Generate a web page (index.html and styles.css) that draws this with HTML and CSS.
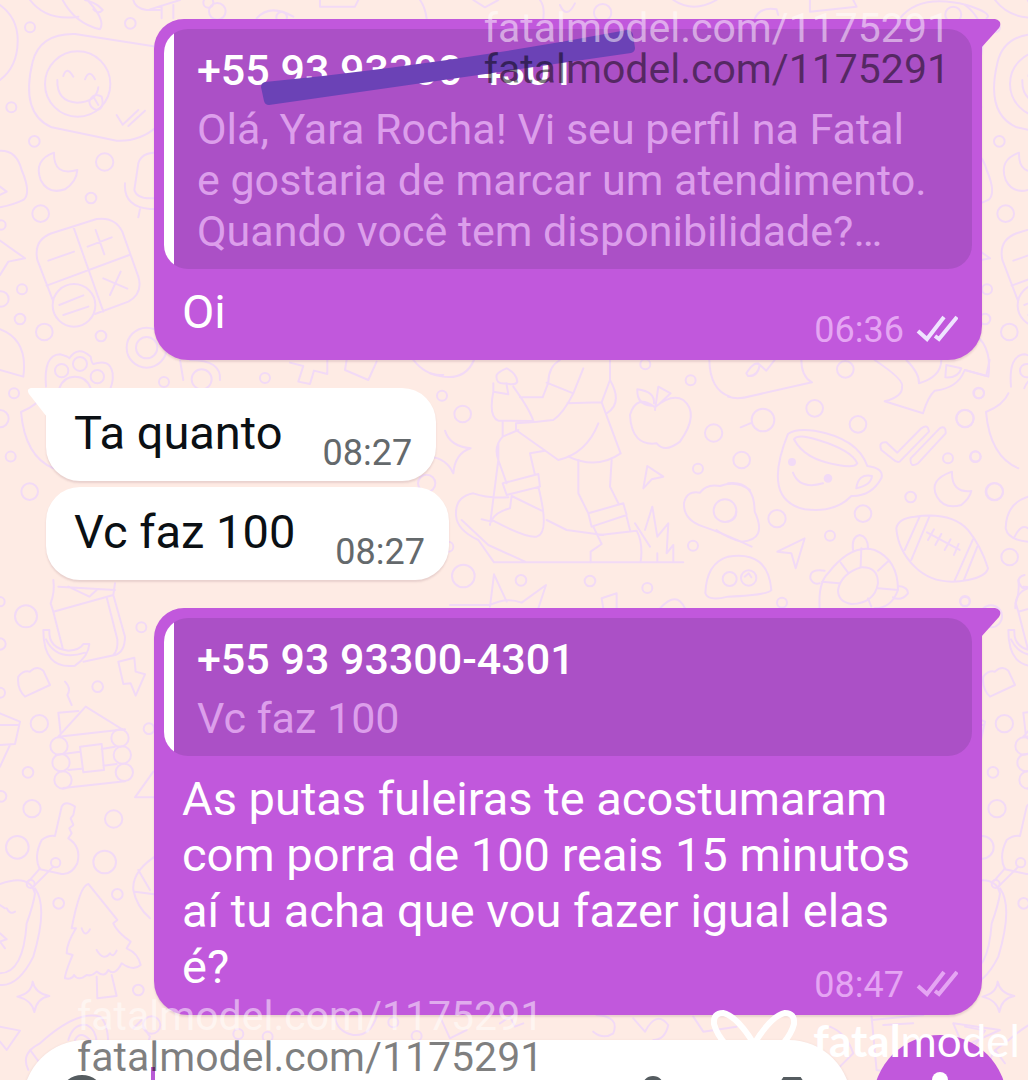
FILE: index.html
```html
<!DOCTYPE html>
<html lang="pt-BR">

<head>
  <meta charset="UTF-8">
  <meta name="viewport" content="width=device-width, initial-scale=1.0">
  <title>Conversa</title>
  <link rel="stylesheet" href="styles.css">
</head>

<body>
  <div class="chat">
    <!-- doodle wallpaper, the left tile repeats every 965px -->
    <svg class="wallpaper" width="1930" height="1080" viewBox="0 0 1930 1080" aria-hidden="true">
      <defs>
        <g id="tile">
          <g transform="scale(.3333)">
            <path d="M0 15Q55 55 53 125Q52 200 0 240M90 0Q140 65 235 50M188 0Q225 70 300 88Q318 60 262 0M255 0Q290 8 308 30Q295 45 280 28M400 0Q405 25 440 30H480" />
            <path d="M480 142L225 102Q120 100 98 185Q60 340 155 382L350 422Q420 425 470 380" />
            <circle cx="233" cy="252" r="98" />
            <path d="M190 228Q200 195 220 230M255 238Q268 205 285 238M172 240Q170 305 232 308Q290 305 295 262M268 305Q280 275 305 290Q315 325 290 330Q270 325 268 305M283 295L295 315" />
            <path d="M350 345L368 374L415 330M385 378L435 332M162 458Q100 480 122 540Q145 585 195 568Q230 545 232 510Q160 530 162 458Z" />
            <circle cx="90" cy="82" r="15" /><circle cx="391" cy="70" r="16" /><circle cx="34" cy="322" r="15" /><circle cx="103" cy="424" r="16" />
            <circle cx="314" cy="486" r="26" /><circle cx="273" cy="594" r="16" /><circle cx="122" cy="641" r="25" /><circle cx="66" cy="868" r="15" />
            <circle cx="60" cy="957" r="16" /><circle cx="133" cy="996" r="25" /><circle cx="303" cy="1008" r="16" /><circle cx="3" cy="897" r="23" /><circle cx="3" cy="675" r="14" />
            <path d="M0 452Q50 450 65 510Q95 580 70 600Q40 615 0 622M0 560L20 575L0 585M0 722L75 775L25 785L0 825M480 458Q425 455 415 490L403 570Q410 595 450 595H480M375 550Q370 620 450 627H480M420 628L415 652" />
            <path d="M155 700L290 657Q345 650 367 695L415 830Q430 880 385 905L285 942M158 900L112 780Q100 720 155 700M220 680L310 935M140 857L388 765M263 740L335 712M287 690L313 763M145 782L222 755M310 835L382 866M362 815L330 885" />
            <circle cx="222" cy="916" r="64" />
            <path d="M178 915L250 886M190 945L265 920M0 988Q85 1020 70 1130L0 1110" />
            <circle cx="440" cy="1043" r="60" /><circle cx="440" cy="1043" r="32" />
            <path d="M138 1160Q130 1065 180 1063Q205 1070 208 1075Q235 1035 272 1070Q275 1090 280 1092Q330 1075 338 1120Q342 1150 320 1190" />
            <circle cx="185" cy="1112" r="20" /><circle cx="240" cy="1092" r="21" /><circle cx="292" cy="1130" r="20" /><path d="M178 1165Q190 1130 225 1130Q260 1130 272 1165" />
            <path d="M130 1180Q115 1215 63 1236Q75 1370 160 1405" /><circle cx="42" cy="1180" r="15" /><circle cx="0" cy="1256" r="26" /><circle cx="32" cy="1370" r="15" /><circle cx="89" cy="1475" r="25" />
            <path d="M540 1080L550 1140M660 1140Q665 1080 570 1080" /><circle cx="605" cy="1138" r="30" /><circle cx="492" cy="1146" r="15" /><circle cx="795" cy="1134" r="15" />
            <path d="M870 1088L910 1098L895 1145L930 1152L942 1112L982 1122V1080M1040 1080L1035 1110L1105 1140L1130 1085M1240 1080Q1280 1130 1330 1125" />
          </g>
          <g transform="translate(0 580) scale(.3333)">
            <path d="M160 0Q165 35 152 70L160 95L340 45L375 170Q375 215 345 225L250 245M160 95L188 205M320 52L352 178Q355 210 340 225M175 20L345 30M205 20L268 50L290 30M345 10L340 45" />
            <path d="M130 150H148Q145 205 205 212Q240 210 250 192H268Q265 230 225 257Q130 270 130 150M138 178Q170 245 255 218" />
            <circle cx="78" cy="109" r="33" /><circle cx="424" cy="142" r="15" /><circle cx="293" cy="320" r="16" /><circle cx="118" cy="431" r="26" />
            <circle cx="84" cy="577" r="16" /><circle cx="96" cy="686" r="26" /><circle cx="341" cy="717" r="26" /><circle cx="52" cy="802" r="34" />
            <circle cx="314" cy="846" r="34" /><circle cx="352" cy="943" r="16" /><circle cx="176" cy="970" r="16" /><circle cx="415" cy="1230" r="16" />
            <circle cx="0" cy="192" r="17" /><circle cx="0" cy="338" r="15" /><circle cx="3" cy="649" r="16" /><circle cx="0" cy="65" r="14" /><circle cx="447" cy="446" r="16" />
            <path d="M355 245L403 233L407 275L435 283L407 347L392 310L370 312ZM55 290Q70 270 90 275Q110 255 130 272L150 315L75 350Q50 325 55 290M195 305Q215 325 202 345L215 375M0 400L60 425L45 492L0 495M0 435H55M30 495L0 560" />
            <path d="M175 470L257 380L370 450M175 470L375 448M182 460L175 398L235 393M240 500L305 492L312 570L250 577ZM190 522L240 515M305 507L345 500M205 570L245 566M310 557L350 552M190 624L375 604" />
            <circle cx="177" cy="498" r="26" /><circle cx="183" cy="548" r="26" /><circle cx="189" cy="600" r="26" /><circle cx="360" cy="474" r="26" /><circle cx="367" cy="525" r="26" /><circle cx="373" cy="577" r="26" />
            <path d="M405 652L460 575M405 652H470M165 768L185 680Q195 660 225 680L220 705L212 715L220 735L208 745L215 760L205 775Q245 800 232 850Q215 885 185 882L120 868Q100 830 125 780Q145 765 165 768" />
            <circle cx="167" cy="848" r="14" /><circle cx="92" cy="912" r="12" />
            <path d="M120 865L88 902M160 860L100 920M0 912Q90 880 105 940Q100 975 80 1030Q70 1180 0 1180M105 925Q145 980 100 1130Q55 1220 0 1215M0 975L15 985M20 985Q30 1005 45 995M0 1060L20 1078L0 1085L15 1105" />
            <path d="M265 912Q240 915 215 1045H228Q200 1090 200 1120L218 1125Q195 1180 195 1195Q215 1200 222 1185Q235 1205 260 1185Q275 1190 290 1175Q315 1195 325 1170Q345 1190 365 1150Q400 1175 422 1155Q415 1120 380 1105L392 1085Q350 1055 340 1030L352 1020Q320 980 265 912M290 1190L292 1255L350 1248L335 1185M245 1045Q255 1075 270 1048M290 1110Q310 1145 330 1120Q340 1135 350 1112" />
            <path d="M98 1205Q105 1240 148 1248Q110 1255 103 1296Q95 1260 52 1250Q95 1240 98 1205ZM0 1340L60 1352L20 1410L0 1385M85 1470Q60 1420 120 1390Q230 1290 300 1310Q325 1330 325 1400M90 1410L120 1450M205 1380Q220 1330 260 1335Q290 1350 290 1390M225 1380Q240 1350 270 1380" />
            <path d="M480 820Q395 870 400 930Q410 980 450 1015M415 870L450 930M405 935L480 945M430 1340L450 1370L440 1400" />
          </g>
        </g>
      </defs>
      <use href="#tile" />
      <use href="#tile" x="965" />
      <g transform="translate(430 360) scale(.3333)">
        <path d="M0 40Q100 75 132 0M45 212Q60 260 122 265Q75 280 70 340Q50 295 0 290" />
        <circle cx="36" cy="107" r="15" /><circle cx="98" cy="162" r="25" /><circle cx="-10" cy="370" r="26" /><circle cx="55" cy="560" r="15" /><circle cx="100" cy="648" r="34" /><circle cx="273" cy="661" r="16" /><circle cx="480" cy="663" r="16" /><circle cx="652" cy="684" r="15" />
        <circle cx="646" cy="13" r="15" /><circle cx="782" cy="61" r="15" /><circle cx="851" cy="219" r="26" /><circle cx="804" cy="326" r="15" /><circle cx="789" cy="557" r="15" />
        <path d="M200 45Q205 35 230 25Q260 40 262 65Q255 78 230 70Q195 75 200 45M190 70V95L235 103L230 75M190 95Q175 170 205 182L310 183Q300 150 250 80M270 112H338L355 68Q355 20 390 0M350 68L430 100L460 25M430 100Q400 160 370 180Q330 185 258 190V210L385 300Q470 280 505 190M412 130L515 127L572 280Q500 330 415 290M540 0V60L515 127M540 60Q580 130 530 160" />
        <path d="M218 185V230L265 210M205 250V300L230 370M218 230Q190 260 205 300L180 495M300 280L345 272M300 280L315 345M218 370L325 342L330 380L230 405ZM325 380Q360 520 320 530Q290 535 185 480Q200 455 240 445L245 408L335 452M235 412Q170 415 130 400Q75 410 78 465Q80 510 145 540L192 607H760M95 480L175 555L285 605M155 478L185 485M350 480L410 510L520 525" />
        <path d="M445 300V400L475 460M545 300L540 380L565 430M475 460L580 430L590 465L485 500ZM490 500L515 552L482 575V607M590 470L600 510M510 525L620 512Q640 550 632 605M615 490L660 560M645 510L667 440L682 530L715 490L710 580L730 555V605M682 580V605" />
        <path d="M675 142Q620 100 600 165Q605 260 680 250Q705 280 750 245Q810 160 760 120Q725 100 675 142M675 150L685 80L722 100L690 130M672 130Q675 95 622 88Q620 135 665 137M640 385L652 318L700 350L665 358ZM838 0Q840 90 900 110" />
        <path d="M180 740L192 643L230 725M60 735L180 735Q230 710 275 728L348 675L325 745M515 715L560 700V745M515 715L520 745M690 745Q740 690 765 745" />
        <path d="M965 560Q880 520 820 500Q760 480 762 430Q770 390 810 398Q830 370 870 378Q920 360 960 390" />
        <circle cx="885" cy="452" r="34" />
      </g>
      <g transform="translate(728 360) scale(.3333)">
        <path d="M0 110Q30 120 70 108L252 67Q220 50 220 0M55 40Q80 0 95 15Q90 50 60 48ZM90 10L115 32L140 0" />
        <circle cx="352" cy="28" r="25" /><circle cx="260" cy="145" r="25" /><circle cx="105" cy="180" r="34" /><path d="M38 202L72 188" />
        <circle cx="390" cy="193" r="25" /><circle cx="41" cy="300" r="25" /><circle cx="752" cy="99" r="16" /><circle cx="711" cy="175" r="26" /><circle cx="660" cy="295" r="15" /><circle cx="742" cy="290" r="16" />
        <circle cx="799" cy="395" r="26" /><circle cx="548" cy="411" r="16" /><circle cx="405" cy="461" r="25" /><circle cx="147" cy="476" r="26" /><circle cx="306" cy="527" r="15" /><circle cx="845" cy="591" r="25" /><circle cx="711" cy="723" r="15" /><circle cx="162" cy="728" r="15" />
        <path d="M440 0Q530 60 522 80Q525 110 470 124L585 160Q600 110 620 92Q690 85 710 30L775 47L785 0M535 0Q575 40 573 70Q640 50 640 0M655 15L652 52Q690 55 700 25Z" />
        <path d="M180 222Q200 205 260 212Q390 235 418 318Q470 325 460 355Q430 410 370 408Q320 460 230 448Q100 420 180 222M198 238Q210 220 270 240Q370 270 388 310Q380 325 330 315Q230 300 198 238M385 385Q390 340 432 348Q430 375 385 385M195 338Q215 390 285 370" />
        <circle class="dot" cx="192" cy="306" r="9" /><circle class="dot" cx="300" cy="355" r="10" />
        <path d="M460 270Q450 245 475 247L508 278L580 205Q600 190 603 215L515 305Q505 308 495 298ZM548 295L635 205Q655 195 653 220L570 310Q545 325 548 295M672 335Q600 360 627 410Q650 450 700 435Q725 415 730 393Q670 400 672 335Z" />
        <path d="M505 505Q510 475 560 470Q670 455 720 510Q760 560 780 625Q775 650 720 660Q620 680 560 620Q510 570 505 505M575 470L530 570M605 468L550 600M735 538L680 662M748 560L708 660M597 517L695 570M618 508L600 540M640 522L622 555M668 538L650 570M692 552L678 585" />
        <path d="M148 575L230 535L203 625L190 580ZM0 370Q80 360 80 455Q120 540 40 545Q0 535 -35 510M0 485Q25 480 25 455M0 590Q120 570 130 690Q120 705 0 710Q-60 725 -68 700Q-65 610 0 590" />
        <circle cx="62" cy="654" r="23" /><circle cx="5" cy="657" r="21" /><path d="M50 650L62 640L70 652" />
        <path d="M275 745Q270 670 300 640Q370 550 440 570Q510 600 510 690Q490 745 440 745M330 690Q340 640 400 622Q450 620 450 670Q440 730 370 732Q330 725 330 690M400 565L398 620M338 608L362 640M282 665L333 670M482 602L450 632M450 685L510 690M420 715L430 740M375 570Q370 530 395 525Q420 530 420 565M290 632Q245 625 247 655Q255 675 275 670M510 678Q540 680 540 700Q520 725 495 712" />
        <path d="M900 410Q835 430 833 505Q840 540 900 545M860 530Q880 490 900 505M890 645Q870 650 872 665Q880 690 900 685Q860 700 862 745" />
      </g>
      <g transform="scale(.3333)">
        <circle cx="625" cy="8" r="15" /><circle cx="352" cy="-34" r="25" /><circle cx="845" cy="52" r="16" />
        <path d="M450 28L540 0M485 20V55M520 15V55M770 55Q810 10 880 50M960 0V20H1065L1075 0M1280 55Q1275 20 1260 0M1420 0L1455 22L1495 0M1630 55Q1635 20 1620 0M1680 15Q1700 60 1725 10M2020 0Q2080 40 2150 0M2265 55Q2280 20 2330 28L2335 45M2430 0V35L2570 20L2560 0M2700 55Q2760 -20 2900 15Q2980 40 2960 55" />
        <circle cx="652" cy="34" r="25" /><circle cx="1808" cy="38" r="26" /><circle cx="2860" cy="44" r="24" />
      </g>
      <g transform="translate(0 960) scale(.3333)">
        <circle cx="455" cy="195" r="26" /><circle cx="715" cy="222" r="15" /><circle cx="803" cy="230" r="15" /><circle cx="1180" cy="187" r="15" /><circle cx="1250" cy="228" r="15" />
        <path d="M400 205L425 180M1005 170Q1010 215 1060 225Q1110 230 1130 170M1320 170L1350 235L1400 210M1500 190L1530 170L1545 200L1570 190M1790 165Q1860 170 1840 220Q1810 240 1780 215M1900 175L1935 215Q1970 150 2005 195Q1995 240 1960 240M2080 170L2110 215L2210 200M2615 170L2630 330L2680 340M2615 180L2770 165M2650 195L2740 190M2490 200Q2540 220 2560 280L2520 320M2860 190L3000 210L2890 260Z" />
      </g>
    </svg>

    <main class="messages">
      <article class="msg out tail">
        <svg class="tail-shape" viewBox="0 0 20 30" width="20" height="30" aria-hidden="true"><path d="M0 0H14Q22 2 18 9L0 29Z" /></svg>
        <blockquote class="quote">
          <b class="quote-name">+55 93 93300-4301
            <svg class="scribble" viewBox="0 0 374 76" width="374" height="76" aria-hidden="true"><path d="M4 52Q186 34 366 0Q371 0 372 5L374 18Q374 22 370 23L8 75Q4 75 3 71L0 57Q0 53 4 52Z" /></svg>
          </b>
          <p class="quote-text">Olá, Yara Rocha! Vi seu perfil na Fatal<br>e gostaria de marcar um atendimento.<br>Quando você tem disponibilidade?…</p>
        </blockquote>
        <div class="body">
          <p class="text">Oi</p>
          <div class="meta">
            <time>06:36</time>
            <svg class="ticks read" viewBox="0 0 42 28" width="42" height="28" role="img" aria-label="Lida"><path d="M2 17L11 25L28 3M19 22L23 25L41 3" /></svg>
          </div>
        </div>
      </article>

      <article class="msg in tail">
        <svg class="tail-shape" viewBox="0 0 20 30" width="20" height="30" aria-hidden="true"><path d="M20 0H4Q-1 1 2 6L20 29Z" /></svg>
        <div class="body">
          <p class="text">Ta quanto</p>
          <div class="meta"><time>08:27</time></div>
        </div>
      </article>

      <article class="msg in">
        <div class="body">
          <p class="text">Vc faz 100</p>
          <div class="meta"><time>08:27</time></div>
        </div>
      </article>

      <article class="msg out tail">
        <svg class="tail-shape" viewBox="0 0 20 30" width="20" height="30" aria-hidden="true"><path d="M0 0H14Q22 2 18 9L0 29Z" /></svg>
        <blockquote class="quote">
          <b class="quote-name">+55 93 93300-4301</b>
          <p class="quote-text">Vc faz 100</p>
        </blockquote>
        <div class="body">
          <p class="text">As putas fuleiras te acostumaram<br>com porra de 100 reais 15 minutos<br>aí tu acha que vou fazer igual elas<br>é?</p>
          <div class="meta">
            <time>08:47</time>
            <svg class="ticks" viewBox="0 0 42 28" width="42" height="28" role="img" aria-label="Entregue"><path d="M2 17L11 25L28 3M19 22L23 25L41 3" /></svg>
          </div>
        </div>
      </article>
    </main>

    <form class="composer">
      <div class="field">
        <button type="button" class="icon-btn" aria-label="Emoji">
          <svg viewBox="0 0 46 46" width="46" height="46"><circle cx="23" cy="23" r="20" /></svg>
        </button>
        <input type="text" class="entry" aria-label="Mensagem">
        <button type="button" class="icon-btn" aria-label="Anexar">
          <svg viewBox="0 0 24 46" width="24" height="46"><path d="M4 40V12a8 8 0 0 1 16 0v28" /></svg>
        </button>
        <button type="button" class="icon-btn" aria-label="Câmera">
          <svg viewBox="0 0 46 42" width="46" height="42"><path d="M3 9H12L16 3H30L34 9H43V38H3Z" /></svg>
        </button>
      </div>
      <button type="button" class="mic" aria-label="Gravar áudio">
        <svg viewBox="0 0 40 58" width="40" height="58"><rect x="12" y="0" width="16" height="34" rx="8" /><path d="M3 24a17 17 0 0 0 34 0M20 42v14" /></svg>
      </button>
    </form>

    <div class="stamp stamp-top"><span>fatalmodel.com/1175291</span><span class="dark">fatalmodel.com/1175291</span></div>
    <div class="stamp stamp-bottom"><span>fatalmodel.com/1175291</span><span class="dark">fatalmodel.com/1175291</span></div>
    <div class="brand">
      <svg viewBox="0 0 86 64" width="86" height="64" aria-hidden="true"><path d="M43 34Q26 6 12 3Q2 3 3 14Q8 34 43 60Q78 34 83 14Q84 3 74 3Q60 6 43 34" /></svg>
      <span><b>fatal</b>model</span>
    </div>
  </div>
</body>

</html>
```

FILE: styles.css
```css
* {
  box-sizing: border-box;
}

body {
  margin: 0;
  font-family: Roboto, "Liberation Sans", sans-serif;
}

p,
blockquote {
  margin: 0;
}

.chat {
  position: relative;
  display: flex;
  flex-direction: column;
  height: 100vh;
  overflow: hidden;
  background: #feebe4;
}

.wallpaper {
  position: absolute;
  top: 0;
  left: 0;
  fill: none;
  stroke: #f2daf6;
  stroke-width: 6;
  stroke-linecap: round;
  stroke-linejoin: round;
}

.wallpaper .dot {
  fill: #f2daf6;
}

.messages {
  position: relative;
  display: flex;
  flex-direction: column;
  align-items: flex-start;
  gap: 6px;
  padding: 19px 46px 20px;
}

.msg {
  position: relative;
  border-radius: 34px;
  box-shadow: 0 2px 2px rgba(120, 70, 90, 0.16);
}

.out {
  align-self: stretch;
  margin-left: 108px;
  padding: 10px 10px 20px;
  border-radius: 30px 0 34px 34px;
  background: #c158dc;
  color: #fff;
}

.in {
  padding: 17px 24px 20px 28px;
  background: #fff;
  color: #0b1014;
}

.in.tail {
  border-top-left-radius: 0;
}

.out + .in {
  margin-top: 22px;
}

.in + .out {
  margin-top: 22px;
}

.tail-shape {
  position: absolute;
  top: 0;
}

.out .tail-shape {
  left: 100%;
  margin-left: -1px;
  fill: #c158dc;
}

.in .tail-shape {
  right: 100%;
  margin-right: -1px;
  fill: #fff;
}

.quote {
  padding: 15px 12px 12px 33px;
  border-radius: 24px;
  background: linear-gradient(90deg, #fff 10px, #ab50c6 10px);
}

.quote-name {
  position: relative;
  display: block;
  margin-bottom: 8px;
  font-size: 43px;
  font-weight: 500;
  line-height: 52px;
}

.quote-text {
  font-size: 43px;
  line-height: 51px;
  color: #dc9eeb;
}

.scribble {
  position: absolute;
  left: 64px;
  top: -14px;
  fill: #6b42b6;
}

/* text and time share one cell, the time sits in the last line */
.out .body {
  display: grid;
  padding: 15px 14px 0 18px;
}

.out .text,
.out .meta {
  grid-area: 1 / 1;
}

.in .body {
  display: flex;
  gap: 40px;
}

.text {
  font-size: 47px;
  line-height: 56px;
}

.meta {
  display: flex;
  align-items: center;
  align-self: end;
  justify-self: end;
  gap: 12px;
  margin-bottom: -12px;
  font-size: 36px;
  line-height: 44px;
}

.out .meta {
  color: #e5a5f3;
}

.in .meta {
  margin-bottom: -14px;
  color: #64696c;
}

.ticks {
  margin-bottom: 4px;
  fill: none;
  stroke: #e5a5f3;
  stroke-width: 4;
}

.ticks.read {
  stroke: #efe4ff;
}

.composer {
  position: relative;
  display: flex;
  align-items: flex-start;
  gap: 22px;
  padding: 0 21px 0 23px;
}

.field {
  display: flex;
  flex: 1;
  min-width: 0;
  height: 124px;
  margin-top: 5px;
  padding: 35px 36px 0;
  border-radius: 62px;
  background: #fff;
  box-shadow: 0 1px 3px rgba(120, 70, 90, 0.16);
}

.icon-btn {
  align-self: flex-start;
  padding: 0;
  border: 0;
  background: none;
}

.icon-btn svg {
  display: block;
  fill: none;
  stroke: #555c60;
  stroke-width: 6;
}

.icon-btn + .icon-btn {
  margin: 2px 0 0 104px;
}

.entry {
  flex: 1;
  min-width: 0;
  height: 56px;
  margin: -8px 0 0 46px;
  padding: 0;
  border: 0;
  border-left: 4px solid #b85bd6;
  background: none;
  font: 47px Roboto, "Liberation Sans", sans-serif;
}

.mic {
  flex: none;
  width: 134px;
  height: 134px;
  padding: 0;
  border: 0;
  border-radius: 50%;
  background: #c158dc;
}

.mic svg {
  fill: #fff;
}

.mic path {
  fill: none;
  stroke: #fff;
  stroke-width: 5;
}

.stamp {
  position: absolute;
  font-size: 41px;
  line-height: 41px;
  color: rgba(255, 255, 255, 0.5);
}

.stamp span {
  display: block;
}

.stamp .dark {
  color: rgba(0, 0, 0, 0.5);
}

.stamp-top {
  top: 8px;
  right: 78px;
}

.stamp-bottom {
  left: 77px;
  bottom: 2px;
}

.brand {
  position: absolute;
  right: 8px;
  bottom: 6px;
  display: flex;
  align-items: flex-start;
  gap: 16px;
  height: 64px;
  font-family: Lato, "Liberation Sans", sans-serif;
  font-size: 44px;
  line-height: 60px;
  color: #fff;
}

.brand svg {
  fill: none;
  stroke: #fff;
  stroke-width: 6;
}
```
